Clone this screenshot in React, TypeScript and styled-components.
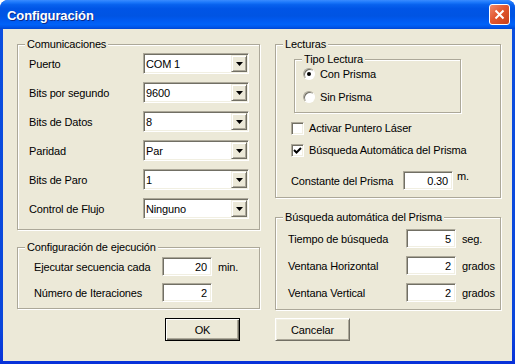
import React from 'react';
import styled, { createGlobalStyle } from 'styled-components';

const GlobalStyle = createGlobalStyle`
  html, body {
    margin: 0;
    padding: 0;
    background: #ffffff;
  }
  body {
    font-family: 'Liberation Sans', Arial, sans-serif;
    font-size: 11px;
    letter-spacing: -0.15px;
    color: #000;
  }
`;

const Window = styled.div`
  width: 515px;
  height: 364px;
  display: flex;
  flex-direction: column;
  background: linear-gradient(to bottom, #0b4fe0, #0a46db 90%, #0831d9);
  border-radius: 8px 8px 0 0;
  overflow: hidden;
`;

const TitleBar = styled.div`
  height: 29px;
  flex: 0 0 auto;
  display: flex;
  align-items: center;
  justify-content: space-between;
  padding: 0 5px 0 7px;
  background: linear-gradient(
    to bottom,
    #3a8cff 0%,
    #1c78fb 8%,
    #0862ee 16%,
    #0055e6 30%,
    #0054e3 55%,
    #005bf2 72%,
    #0062f8 84%,
    #0058ec 92%,
    #0047d4 100%
  );
`;

const Title = styled.span`
  font: bold 13px 'Liberation Sans', Arial, sans-serif;
  color: #ffffff;
  letter-spacing: -0.1px;
  text-shadow: 1px 1px 0 #0a2a8a;
  margin-top: 1px;
`;

const CloseButton = styled.div`
  width: 21px;
  height: 21px;
  box-sizing: border-box;
  border: 1px solid #ffffff;
  border-radius: 3px;
  background: linear-gradient(135deg, #f08a6c 0%, #e2572f 45%, #c8401b 100%);
  display: flex;
  align-items: center;
  justify-content: center;
`;

const Client = styled.div`
  flex: 1;
  margin: 0 3px 3px 3px;
  background: #ece9d8;
  display: flex;
  flex-direction: column;
`;

const Columns = styled.div`
  display: grid;
  grid-template-columns: 243px 226px;
  column-gap: 15px;
  padding: 15px 0 0 14px;
`;

const Column = styled.div<{ $gap: number }>`
  display: flex;
  flex-direction: column;
  gap: ${p => p.$gap}px;
`;

const GroupBox = styled.div<{ $height: number }>`
  position: relative;
  box-sizing: border-box;
  height: ${p => p.$height}px;
  border: 1px solid #aca899;
  box-shadow: inset 1px 1px 0 #ffffff, 1px 1px 0 #ffffff;
  display: flex;
  flex-direction: column;
`;

const Caption = styled.span`
  position: absolute;
  top: -7px;
  left: 7px;
  padding: 0 2px;
  line-height: 13px;
  background: #ece9d8;
  white-space: nowrap;
`;

const ComboGrid = styled.div`
  display: grid;
  grid-template-columns: 114px 106px;
  grid-auto-rows: 21px;
  row-gap: 8px;
  align-items: center;
  padding: 8px 0 0 11px;
`;

const FieldGrid = styled.div<{ $pad: string; $label: number; $gap: number }>`
  display: grid;
  grid-template-columns: ${p => p.$label}px 50px auto;
  grid-auto-rows: 19px;
  row-gap: ${p => p.$gap}px;
  align-items: center;
  padding: ${p => p.$pad};
`;

const Label = styled.span`
  white-space: nowrap;
`;

const Unit = styled.span<{ $raised?: boolean }>`
  padding-left: ${p => (p.$raised ? 4 : 6)}px;
  align-self: ${p => (p.$raised ? 'start' : 'center')};
  margin-top: ${p => (p.$raised ? -1 : 0)}px;
  white-space: nowrap;
`;

const Sunken = styled.div`
  position: relative;
  box-sizing: border-box;
  background: #ffffff;
  border: 1px solid;
  border-color: #aca899 #ffffff #ffffff #aca899;
  box-shadow: inset 1px 1px 0 #716f64, inset -1px -1px 0 #f1efe2;
`;

const Combo = styled(Sunken)`
  width: 106px;
  height: 21px;
  display: flex;
  align-items: center;
  padding-left: 2px;
`;

const DropButton = styled.div`
  position: absolute;
  top: 1px;
  right: 1px;
  width: 16px;
  height: 17px;
  box-sizing: border-box;
  background: #ece9d8;
  border: 1px solid;
  border-color: #f1efe2 #716f64 #716f64 #f1efe2;
  box-shadow: inset 1px 1px 0 #ffffff, inset -1px -1px 0 #aca899;
  display: flex;
  align-items: center;
  justify-content: center;
`;

const Edit = styled(Sunken)`
  width: 50px;
  height: 19px;
  display: flex;
  align-items: center;
  justify-content: flex-end;
  padding-right: 4px;
`;

const TipoBox = styled(GroupBox)`
  margin: 14px 0 0 18px;
  width: 167px;
  padding: 6px 0 0 8px;
  gap: 7px;
`;

const OptionRow = styled.label<{ $indent?: number; $top?: number }>`
  height: 16px;
  display: flex;
  align-items: center;
  gap: 5px;
  margin-left: ${p => p.$indent ?? 0}px;
  margin-top: ${p => p.$top ?? 0}px;
`;

const Radio = styled.span<{ $checked?: boolean }>`
  position: relative;
  width: 12px;
  height: 12px;
  box-sizing: border-box;
  border-radius: 50%;
  background: #ffffff;
  border: 1px solid;
  border-color: #aca899 #ffffff #ffffff #aca899;
  box-shadow: inset 1px 1px 0 #716f64;
  &::after {
    content: '';
    display: ${p => (p.$checked ? 'block' : 'none')};
    position: absolute;
    left: 3px;
    top: 3px;
    width: 4px;
    height: 4px;
    border-radius: 50%;
    background: #000;
  }
`;

const CheckBox = styled(Sunken)`
  width: 13px;
  height: 13px;
  display: flex;
  align-items: center;
  justify-content: center;
`;

const LecturasBody = styled.div`
  display: flex;
  flex-direction: column;
`;

const ButtonRow = styled.div`
  display: flex;
  justify-content: center;
  gap: 35px;
  padding-top: 8px;
`;

const Button = styled.button<{ $default?: boolean }>`
  width: 75px;
  height: 23px;
  box-sizing: border-box;
  padding: 0;
  font: 11px 'Liberation Sans', Arial, sans-serif;
  letter-spacing: -0.15px;
  color: #000;
  background: #ece9d8;
  border: 1px solid;
  border-color: ${p => (p.$default ? '#000' : '#fff #716f64 #716f64 #fff')};
  box-shadow: ${p =>
    p.$default
      ? 'inset 1px 1px 0 #fff, inset -1px -1px 0 #716f64, inset -2px -2px 0 #aca899'
      : 'inset 1px 1px 0 #f1efe2, inset -1px -1px 0 #aca899'};
`;

const Arrow = () => (
  <svg width="7" height="4" viewBox="0 0 7 4">
    <path d="M0 0 H7 L3.5 4 Z" fill="#000" />
  </svg>
);

const Check = () => (
  <svg width="9" height="9" viewBox="0 0 9 9">
    <path d="M1 4 L3.5 6.5 L8 2" stroke="#000" strokeWidth="2" fill="none" />
  </svg>
);

const comms = [
  { label: 'Puerto', value: 'COM 1' },
  { label: 'Bits por segundo', value: '9600' },
  { label: 'Bits de Datos', value: '8' },
  { label: 'Paridad', value: 'Par' },
  { label: 'Bits de Paro', value: '1' },
  { label: 'Control de Flujo', value: 'Ninguno' },
];

const busqueda = [
  { label: 'Tiempo de búsqueda', value: '5', unit: 'seg.' },
  { label: 'Ventana Horizontal', value: '2', unit: 'grados' },
  { label: 'Ventana Vertical', value: '2', unit: 'grados' },
];

export default function App() {
  return (
    <>
      <GlobalStyle />
      <Window>
        <TitleBar>
          <Title>Configuración</Title>
          <CloseButton>
            <svg width="11" height="11" viewBox="0 0 11 11">
              <path d="M1.5 1.5 L9.5 9.5 M9.5 1.5 L1.5 9.5" stroke="#fff" strokeWidth="2" />
            </svg>
          </CloseButton>
        </TitleBar>
        <Client>
          <Columns>
            <Column $gap={17}>
              <GroupBox $height={186}>
                <Caption>Comunicaciones</Caption>
                <ComboGrid>
                  {comms.map(c => (
                    <React.Fragment key={c.label}>
                      <Label>{c.label}</Label>
                      <Combo>
                        {c.value}
                        <DropButton>
                          <Arrow />
                        </DropButton>
                      </Combo>
                    </React.Fragment>
                  ))}
                </ComboGrid>
              </GroupBox>
              <GroupBox $height={62}>
                <Caption>Configuración de ejecución</Caption>
                <FieldGrid $pad="9px 0 0 16px" $label={128} $gap={7}>
                  <Label>Ejecutar secuencia cada</Label>
                  <Edit>20</Edit>
                  <Unit>min.</Unit>
                  <Label>Número de Iteraciones</Label>
                  <Edit>2</Edit>
                  <span />
                </FieldGrid>
              </GroupBox>
            </Column>
            <Column $gap={19}>
              <GroupBox $height={154}>
                <Caption>Lecturas</Caption>
                <LecturasBody>
                  <TipoBox $height={54}>
                    <Caption>Tipo Lectura</Caption>
                    <OptionRow>
                      <Radio $checked />
                      Con Prisma
                    </OptionRow>
                    <OptionRow>
                      <Radio />
                      Sin Prisma
                    </OptionRow>
                  </TipoBox>
                  <OptionRow $indent={15} $top={7}>
                    <CheckBox />
                    Activar Puntero Láser
                  </OptionRow>
                  <OptionRow $indent={15} $top={6}>
                    <CheckBox>
                      <Check />
                    </CheckBox>
                    Búsqueda Automática del Prisma
                  </OptionRow>
                  <FieldGrid $pad="13px 0 0 15px" $label={112} $gap={0}>
                    <Label>Constante del Prisma</Label>
                    <Edit>0.30</Edit>
                    <Unit $raised>m.</Unit>
                  </FieldGrid>
                </LecturasBody>
              </GroupBox>
              <GroupBox $height={93}>
                <Caption>Búsqueda automática del Prisma</Caption>
                <FieldGrid $pad="11px 0 0 12px" $label={118} $gap={8}>
                  {busqueda.map(b => (
                    <React.Fragment key={b.label}>
                      <Label>{b.label}</Label>
                      <Edit>{b.value}</Edit>
                      <Unit>{b.unit}</Unit>
                    </React.Fragment>
                  ))}
                </FieldGrid>
              </GroupBox>
            </Column>
          </Columns>
          <ButtonRow>
            <Button $default>OK</Button>
            <Button>Cancelar</Button>
          </ButtonRow>
        </Client>
      </Window>
    </>
  );
}
